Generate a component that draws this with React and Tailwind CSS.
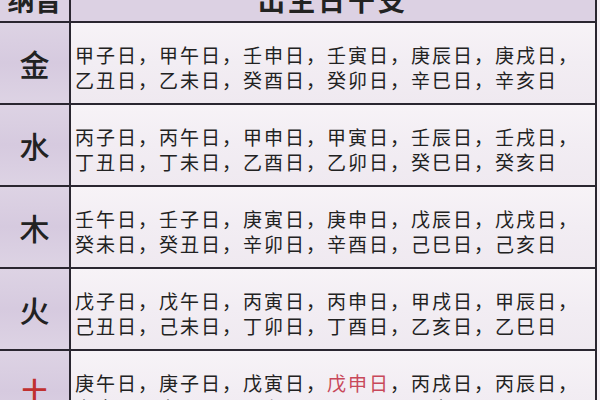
const ROWS = [
  {
    label: '金',
    lines: [
      ['甲子日，甲午日，壬申日，壬寅日，庚辰日，庚戌日，'],
      ['乙丑日，乙未日，癸酉日，癸卯日，辛巳日，辛亥日'],
    ],
  },
  {
    label: '水',
    lines: [
      ['丙子日，丙午日，甲申日，甲寅日，壬辰日，壬戌日，'],
      ['丁丑日，丁未日，乙酉日，乙卯日，癸巳日，癸亥日'],
    ],
  },
  {
    label: '木',
    lines: [
      ['壬午日，壬子日，庚寅日，庚申日，戊辰日，戊戌日，'],
      ['癸未日，癸丑日，辛卯日，辛酉日，己巳日，己亥日'],
    ],
  },
  {
    label: '火',
    lines: [
      ['戊子日，戊午日，丙寅日，丙申日，甲戌日，甲辰日，'],
      ['己丑日，己未日，丁卯日，丁酉日，乙亥日，乙巳日'],
    ],
  },
  {
    label: '土',
    red: true,
    lines: [
      ['庚午日，庚子日，戊寅日，', { red: '戊申日' }, '，丙戌日，丙辰日，'],
      ['辛未日，辛丑日，己卯日，己酉日，丁亥日，丁巳日'],
    ],
  },
];

const FONT = { fontFamily: '"Noto Sans CJK SC", "Noto Sans", sans-serif' };

function Line({ parts }) {
  return (
    <div className="whitespace-nowrap">
      {parts.map((p, i) =>
        typeof p === 'string' ? (
          <span key={i}>{p}</span>
        ) : (
          <span key={i} className="text-[#c8485a]">
            {p.red}
          </span>
        )
      )}
    </div>
  );
}

export default function App() {
  return (
    <div className="h-[400px] w-[600px] overflow-hidden bg-[#f6f1f6]" style={FONT}>
      <div className="-mt-[18px] w-[597px] border-r-2 border-[#2a2630]">
        {/* header, mostly scrolled out of view */}
        <div className="flex h-[41px] border-b-2 border-[#2a2630] bg-[#dcd1e3]">
          <div className="flex w-[71px] items-end justify-center border-r-2 border-[#2a2630] pb-[8px] text-[27px] font-bold leading-none text-[#222]">
            纳音
          </div>
          <div className="flex flex-1 items-end justify-center pb-[8px] text-[27px] font-bold leading-none tracking-[3px] text-[#222]">
            出生日干支
          </div>
        </div>

        {ROWS.map((row) => (
          <div key={row.label} className="flex h-[82px] border-b-2 border-[#2a2630]">
            <div
              className={`flex w-[71px] items-center justify-center border-r-2 border-[#2a2630] bg-gradient-to-b from-[#ddd3e4] via-[#d6cadf] to-[#ddd3e4] text-[30px] font-medium ${
                row.red ? 'text-[#c0302f]' : 'text-[#222]'
              }`}
            >
              {row.label}
            </div>
            <div className="flex flex-1 flex-col justify-center bg-gradient-to-b from-[#f7f3f7] via-[#f2edf3] to-[#efe9f0] pl-[4px] pt-[8px] text-[19px] leading-[25px] tracking-[2px] text-[#222]">
              {row.lines.map((parts, i) => (
                <Line key={i} parts={parts} />
              ))}
            </div>
          </div>
        ))}
      </div>
    </div>
  );
}
